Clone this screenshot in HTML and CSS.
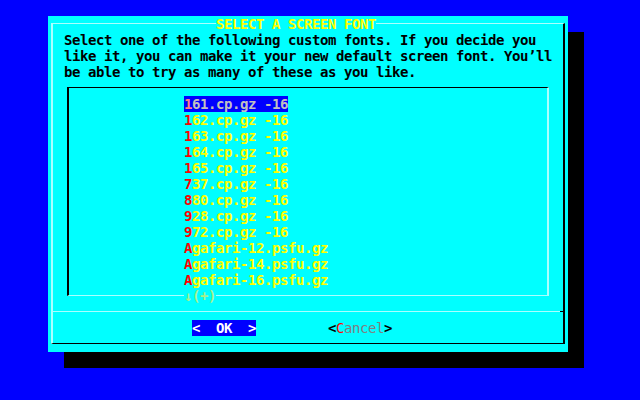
FILE: index.html
```html
<!DOCTYPE html>
<html>
<head>
<meta charset="utf-8">
<link rel="stylesheet" href="styles.css">
</head>
<body>
<div class="screen">
  <div class="dialog">
    <div class="frame">
      <div class="title-row"><span class="title">SELECT A SCREEN FONT</span></div>
      <div class="desc">Select one of the following custom fonts. If you decide you
like it, you can make it your new default screen font. You’ll
be able to try as many of these as you like.</div>
      <div class="listbox">
        <ul class="items">
          <li class="item sel"><span class="lbl"><span class="hot">1</span>61.cp.gz -16</span></li>
          <li class="item"><span class="lbl"><span class="hot">1</span>62.cp.gz -16</span></li>
          <li class="item"><span class="lbl"><span class="hot">1</span>63.cp.gz -16</span></li>
          <li class="item"><span class="lbl"><span class="hot">1</span>64.cp.gz -16</span></li>
          <li class="item"><span class="lbl"><span class="hot">1</span>65.cp.gz -16</span></li>
          <li class="item"><span class="lbl"><span class="hot">7</span>37.cp.gz -16</span></li>
          <li class="item"><span class="lbl"><span class="hot">8</span>80.cp.gz -16</span></li>
          <li class="item"><span class="lbl"><span class="hot">9</span>28.cp.gz -16</span></li>
          <li class="item"><span class="lbl"><span class="hot">9</span>72.cp.gz -16</span></li>
          <li class="item"><span class="lbl"><span class="hot">A</span>gafari-12.psfu.gz</span></li>
          <li class="item"><span class="lbl"><span class="hot">A</span>gafari-14.psfu.gz</span></li>
          <li class="item"><span class="lbl"><span class="hot">A</span>gafari-16.psfu.gz</span></li>
        </ul>
      </div>
      <div class="more"><span class="more-lbl">↓(+)</span></div>
      <div class="sep"></div>
      <div class="buttons">
        <span class="btn ok">&lt;  OK  &gt;</span>
        <span class="btn cancel">&lt;<span class="hot">C</span><span class="rest">ancel</span>&gt;</span>
      </div>
    </div>
  </div>
</div>
</body>
</html>
```
FILE: styles.css
```css
* { box-sizing: border-box; }
html, body {
  margin: 0;
  padding: 0;
  background: #0000ff;
}
.screen {
  width: 640px;
  height: 400px;
  padding: 16px 0 0 48px;
  background: #0000ff;
  font-family: "DejaVu Sans Mono", "Liberation Mono", monospace;
  font-size: 14px;
  letter-spacing: -0.428px;
  line-height: 16px;
  font-weight: bold;
}
.title, .desc, .lbl, .btn, .more-lbl { white-space: pre; }
.dialog {
  width: 520px;
  height: 336px;
  padding: 7px 3px 8px 3px;
  background: #00ffff;
  box-shadow: 16px 16px 0 #000;
}
.frame {
  height: 100%;
  border-top: 1px solid #aaffff;
  border-left: 2px solid #aaffff;
  border-right: 2px solid #000;
  border-bottom: 1px solid #000;
}
.title-row {
  margin-top: -8px;
  height: 16px;
  padding-left: 163px;
}
.title {
  background: #00ffff;
  color: #ffff00;
}
.desc {
  height: 48px;
  padding-left: 11px;
  color: #000;
}
.listbox {
  margin: 7px 14px 0 14px;
  border-top: 1px solid #000;
  border-left: 2px solid #000;
  border-right: 2px solid #aaffff;
  border-bottom: 1px solid #aaffff;
  padding: 8px 0 7px 115px;
}
.items {
  list-style: none;
  margin: 0;
  padding: 0;
}
.item {
  height: 16px;
  color: #ffff00;
}
.item .hot { color: #ff0000; }
.item.sel .lbl {
  background: #0000ff;
  color: #c0c0c0;
}
.item.sel .hot { color: #ff8080; }
.more {
  margin-top: -8px;
  height: 16px;
  padding-left: 131px;
}
.more-lbl {
  background: #00ffff;
  color: #a8f08c;
}
.sep {
  margin-top: 7px;
  height: 1px;
  background: #aaffff;
  border-right: 3px solid #000;
}
.buttons {
  margin-top: 8px;
  height: 16px;
  padding-left: 139px;
  display: flex;
  gap: 72px;
}
.btn { display: block; height: 16px; }
.ok {
  background: #0000ff;
  color: #ffffff;
}
.cancel {
  color: #000;
}
.cancel .hot { color: #ff0000; font-weight: normal; }
.cancel .rest { color: #808080; font-weight: normal; }
```
